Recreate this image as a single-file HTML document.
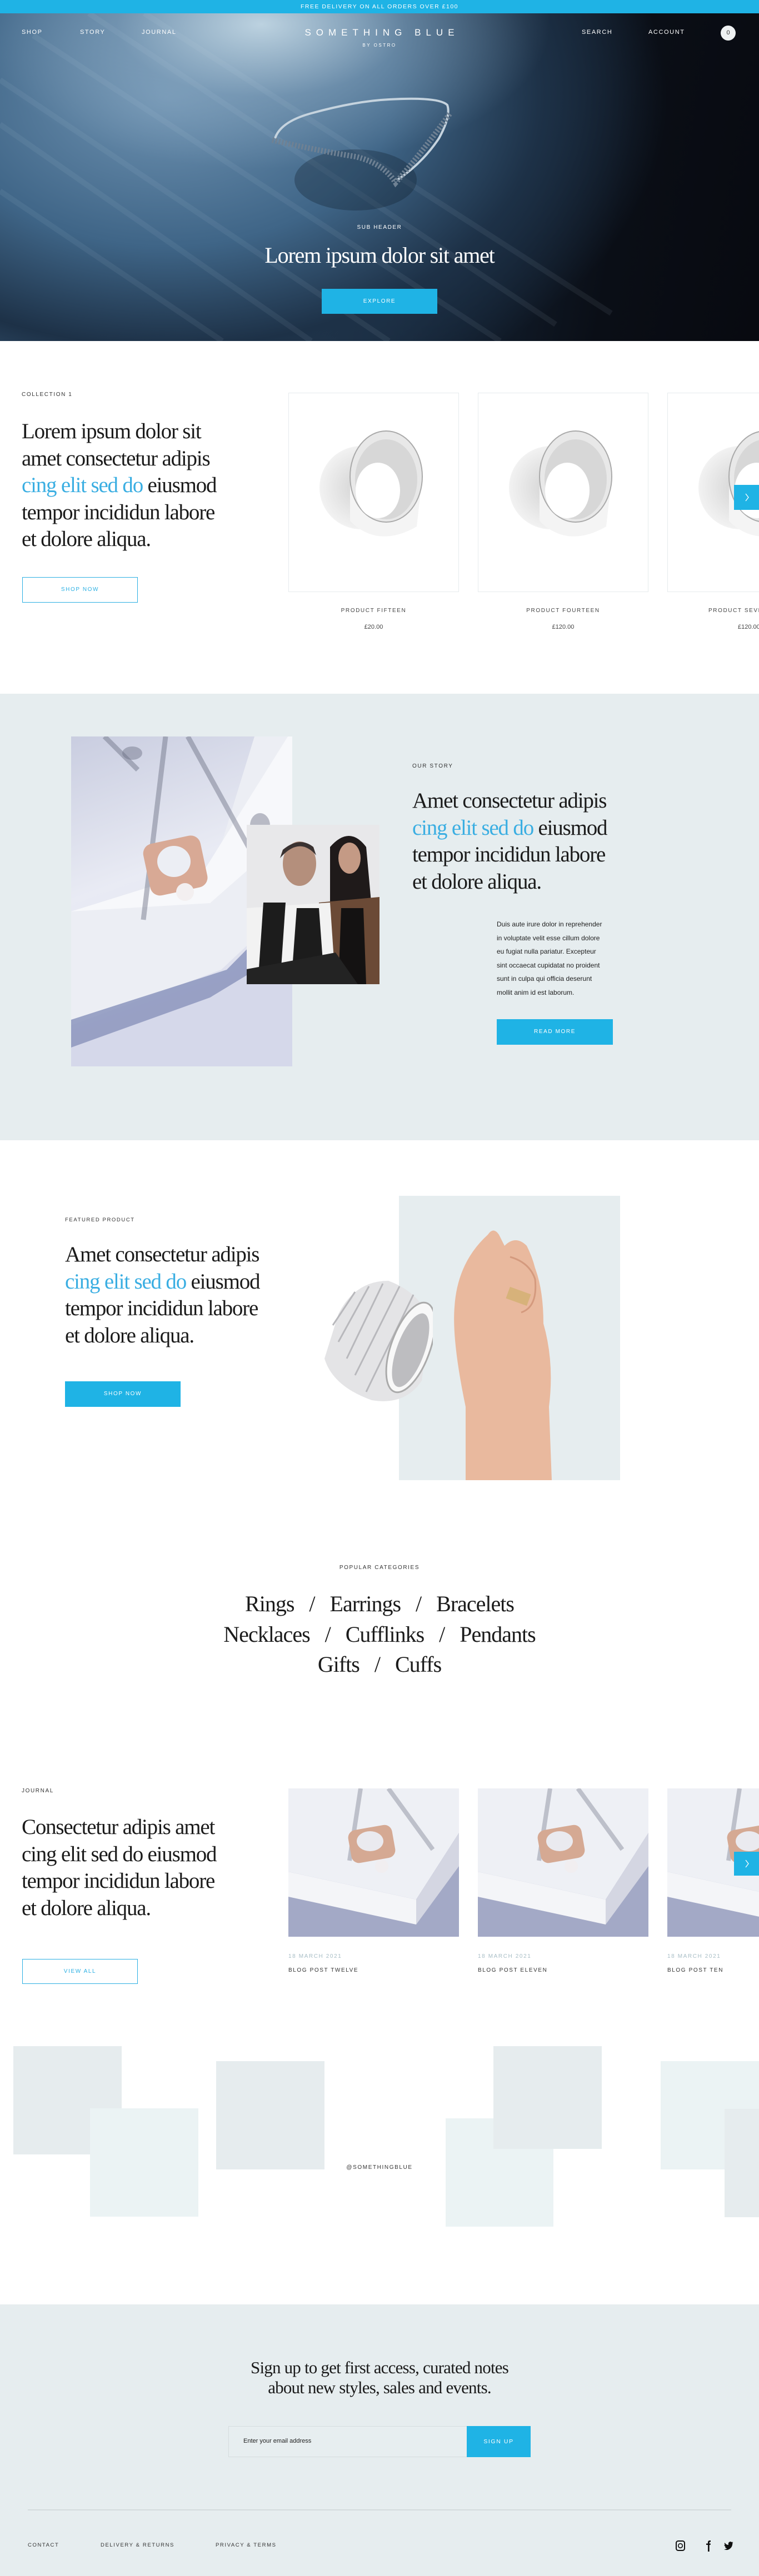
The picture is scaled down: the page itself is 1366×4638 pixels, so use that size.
<!DOCTYPE html>
<html><head><meta charset="utf-8"><style>
*{margin:0;padding:0;box-sizing:border-box}
html,body{width:1366px;height:4638px;overflow:hidden}
body{position:relative;background:#fff;font-family:"Liberation Sans",sans-serif}
#w{position:absolute;left:0;top:0;width:1366px;height:4638px;overflow:hidden}
.a{position:absolute}
.sm{font-size:11px;letter-spacing:1.6px;text-transform:uppercase;white-space:nowrap}
.h{font-family:"Liberation Serif",serif;font-size:39px;line-height:48.5px;color:#1b1b1b;letter-spacing:-1.2px;white-space:nowrap}
.b{color:#3aaee2}
.btn{background:#1fb3e5;color:#fff;text-align:center;font-size:11px;letter-spacing:1.6px}
.obtn{border:1.5px solid #2cb0e3;color:#2cb0e3;text-align:center;font-size:11px;letter-spacing:1.6px}
.card{border:1px solid #e6ebed;background:#fff;overflow:hidden}
.gray{background:#e6edef}
</style></head><body><div id="w">

<div class="a" style="left:0;top:0;width:1366px;height:24px;background:#1fb3e5;color:#fff;text-align:center;line-height:24px;font-size:10.5px;letter-spacing:1.5px">FREE DELIVERY ON ALL ORDERS OVER £100</div>

<div class="a" style="left:0;top:24px;width:1366px;height:590px;overflow:hidden;background:
radial-gradient(ellipse 520px 260px at 470px 20px,rgba(200,220,232,.9),rgba(140,170,195,.5) 50%,rgba(0,0,0,0) 100%),
radial-gradient(ellipse 900px 600px at 300px 150px,#6f93b2,#3f6587 45%,#1d3147 75%,rgba(10,14,22,0) 100%),
linear-gradient(100deg,#4a6f90 0%,#2a4560 35%,#142233 60%,#0a0e16 80%,#080a10 100%)">
<svg class="a" style="left:0;top:0" width="1366" height="590">
<g opacity=".07" stroke="#cfe1ee" stroke-width="10">
<line x1="0" y1="120" x2="700" y2="590"/><line x1="0" y1="200" x2="560" y2="590"/><line x1="60" y1="40" x2="900" y2="590"/><line x1="160" y1="0" x2="1000" y2="560"/><line x1="0" y1="320" x2="400" y2="590"/><line x1="260" y1="0" x2="1100" y2="540"/>
</g>
<ellipse cx="640" cy="300" rx="110" ry="55" fill="#0d1a28" opacity=".3"/>
<path d="M495 225 Q505 195 560 180 Q640 158 700 155 Q790 150 805 165 Q812 185 790 225 Q760 270 715 300" fill="none" stroke="#c5d3de" stroke-width="4"/>
<path d="M490 228 Q560 245 640 258 Q690 270 712 305 Q760 250 810 180" fill="none" stroke="#6f8193" stroke-width="10" stroke-dasharray="3 3"/>
</svg>
<div class="a sm" style="left:39px;top:28px;color:#fff">SHOP</div>
<div class="a sm" style="left:144px;top:28px;color:#fff">STORY</div>
<div class="a sm" style="left:255px;top:28px;color:#fff">JOURNAL</div>
<div class="a" style="left:0;width:1366px;top:25px;text-align:center;color:#fff;font-size:17px;letter-spacing:9px;text-indent:9px">SOMETHING BLUE</div>
<div class="a" style="left:0;width:1366px;top:53px;text-align:center;color:#fff;font-size:8px;letter-spacing:2.5px">BY OSTRO</div>
<div class="a sm" style="left:1047px;top:28px;color:#fff">SEARCH</div>
<div class="a sm" style="left:1167px;top:28px;color:#fff">ACCOUNT</div>
<div class="a" style="left:1297px;top:22px;width:27px;height:27px;border-radius:50%;background:#eef1f2;color:#333;font-size:11px;text-align:center;line-height:27px">0</div>
<div class="a sm" style="left:0;width:1366px;text-align:center;top:380px;color:#fff;font-size:10px">SUB HEADER</div>
<div class="a h" style="left:0;width:1366px;text-align:center;top:412px;color:#fff;font-size:40px">Lorem ipsum dolor sit amet</div>
<div class="a btn" style="left:579px;top:496px;width:208px;height:45px;line-height:45px;font-size:10px">EXPLORE</div>
</div>

<div class="a sm" style="left:39px;top:705px;color:#333;font-size:10px">COLLECTION 1</div>
<div class="a h" style="left:39px;top:753px">Lorem ipsum dolor sit<br>amet consectetur adipis<br><span class="b">cing elit sed do</span> eiusmod<br>tempor incididun labore<br>et dolore aliqua.</div>
<div class="a obtn" style="left:40px;top:1039px;width:208px;height:46px;line-height:44px;font-size:10px">SHOP NOW</div>

<svg width="0" height="0" style="position:absolute"><defs>
<radialGradient id="sh" cx=".5" cy=".5" r=".5"><stop offset="0" stop-color="#d2d2d2"/><stop offset="1" stop-color="#f2f2f2"/></radialGradient>
</defs></svg>

<div class="a card" style="left:519px;top:707px;width:307px;height:359px">
<svg width="305" height="357"><ellipse cx="130" cy="170" rx="75" ry="75" fill="url(#sh)"/><path d="M110 140 L110 230 Q160 280 230 240 L240 150 Z" fill="#f4f4f4"/><ellipse cx="175" cy="150" rx="65" ry="82" fill="#e8e8e8" stroke="#aaa" stroke-width="2"/><ellipse cx="175" cy="155" rx="56" ry="72" fill="#d7d7d7"/><ellipse cx="160" cy="175" rx="40" ry="50" fill="#fff"/></svg>
</div>
<div class="a card" style="left:860px;top:707px;width:307px;height:359px">
<svg width="305" height="357"><ellipse cx="130" cy="170" rx="75" ry="75" fill="url(#sh)"/><path d="M110 140 L110 230 Q160 280 230 240 L240 150 Z" fill="#f4f4f4"/><ellipse cx="175" cy="150" rx="65" ry="82" fill="#e8e8e8" stroke="#aaa" stroke-width="2"/><ellipse cx="175" cy="155" rx="56" ry="72" fill="#d7d7d7"/><ellipse cx="160" cy="175" rx="40" ry="50" fill="#fff"/></svg>
</div>
<div class="a card" style="left:1201px;top:707px;width:165px;height:359px;border-right:none">
<svg width="165" height="357"><ellipse cx="130" cy="170" rx="75" ry="75" fill="url(#sh)"/><path d="M110 140 L110 230 Q160 280 230 240 L240 150 Z" fill="#f4f4f4"/><ellipse cx="175" cy="150" rx="65" ry="82" fill="#e8e8e8" stroke="#aaa" stroke-width="2"/><ellipse cx="175" cy="155" rx="56" ry="72" fill="#d7d7d7"/><ellipse cx="160" cy="175" rx="40" ry="50" fill="#fff"/></svg>
</div>
<div class="a sm" style="left:519px;width:307px;text-align:center;top:1094px;color:#444;font-size:10px">PRODUCT FIFTEEN</div>
<div class="a" style="left:519px;width:307px;text-align:center;top:1123px;color:#444;font-size:11px">£20.00</div>
<div class="a sm" style="left:860px;width:307px;text-align:center;top:1094px;color:#444;font-size:10px">PRODUCT FOURTEEN</div>
<div class="a" style="left:860px;width:307px;text-align:center;top:1123px;color:#444;font-size:11px">£120.00</div>
<div class="a sm" style="left:1275px;top:1094px;color:#444;font-size:10px">PRODUCT SEVENTEEN</div>
<div class="a" style="left:1328px;top:1123px;color:#444;font-size:11px;white-space:nowrap">£120.00</div>
<div class="a" style="left:1321px;top:873px;width:45px;height:45px;background:#1fb3e5"><svg width="45" height="45"><path d="M21 16 L26 22.5 L21 29" fill="none" stroke="#fff" stroke-width="1.3"/></svg></div>

<div class="a gray" style="left:0;top:1249px;width:1366px;height:804px"></div>
<div class="a" style="left:128px;top:1326px;width:398px;height:594px;overflow:hidden;background:linear-gradient(160deg,#c9cde0 0%,#e9ebf4 40%,#dfe1ee 70%,#c3c7e0 100%)">
<svg width="398" height="594">
<polygon points="0,315 0,520 270,420 398,300 398,0 330,0 250,260" fill="#eceef4"/>
<polygon points="0,315 250,300 398,170 398,0 390,0 240,240" fill="#f7f8fb"/>
<polygon points="0,510 280,420 398,300 398,420 270,680 0,680" fill="#8c95bd" opacity=".85"/>
<polygon points="0,560 250,470 398,380 398,594 0,594" fill="#d5d8ea"/>
<g stroke="#6a6f82" stroke-width="9" opacity=".45" fill="none"><path d="M170 0 L130 330"/><path d="M210 0 L320 200"/><path d="M60 0 L120 60"/></g>
<ellipse cx="110" cy="30" rx="18" ry="12" fill="#6a6f82" opacity=".45"/><ellipse cx="340" cy="160" rx="18" ry="22" fill="#6a6f82" opacity=".45"/>
<rect x="135" y="185" width="105" height="95" rx="18" fill="#d8a995" transform="rotate(-12 187 232)"/>
<ellipse cx="185" cy="225" rx="30" ry="28" fill="#eceef4"/>
<circle cx="205" cy="280" r="16" fill="#f3eff0"/>
</svg></div>
<div class="a" style="left:444px;top:1485px;width:239px;height:287px;background:#e8e8ea;overflow:hidden">
<svg width="239" height="287">
<ellipse cx="95" cy="70" rx="30" ry="40" fill="#b48f7c"/>
<path d="M60 60 Q95 20 125 55 L120 40 Q95 20 65 45Z" fill="#3a3231"/>
<path d="M150 40 Q185 0 215 40 L225 150 L150 150 Z" fill="#1f1a1a"/>
<ellipse cx="185" cy="60" rx="20" ry="28" fill="#c49a85"/>
<path d="M130 140 L239 130 L239 287 L120 287 Z" fill="#6b4a36"/>
<path d="M170 150 L210 150 L215 287 L165 287 Z" fill="#141212"/>
<path d="M0 150 L150 140 L160 287 L0 287 Z" fill="#f2f2f2"/>
<path d="M30 140 L70 140 L60 287 L20 287 Z" fill="#1c1c1c"/>
<path d="M90 150 L130 150 L140 287 L80 287 Z" fill="#1c1c1c"/>
<path d="M0 260 L160 230 L200 287 L0 287 Z" fill="#232323"/>
</svg></div>
<div class="a sm" style="left:742px;top:1374px;color:#333;font-size:10px">OUR STORY</div>
<div class="a h" style="left:742px;top:1418px">Amet consectetur adipis<br><span class="b">cing elit sed do</span> eiusmod<br>tempor incididun labore<br>et dolore aliqua.</div>
<div class="a" style="left:894px;top:1652px;font-size:12px;line-height:24.5px;color:#222;white-space:nowrap">Duis aute irure dolor in reprehender<br>in voluptate velit esse cillum dolore<br>eu fugiat nulla pariatur. Excepteur<br>sint occaecat cupidatat no proident<br>sunt in culpa qui officia deserunt<br>mollit anim id est laborum.</div>
<div class="a btn" style="left:894px;top:1835px;width:209px;height:46px;line-height:46px;font-size:10px">READ MORE</div>

<div class="a sm" style="left:117px;top:2191px;color:#333;font-size:9.5px">FEATURED PRODUCT</div>
<div class="a h" style="left:117px;top:2235px">Amet consectetur adipis<br><span class="b">cing elit sed do</span> eiusmod<br>tempor incididun labore<br>et dolore aliqua.</div>
<div class="a btn" style="left:117px;top:2487px;width:208px;height:46px;line-height:46px;font-size:10px">SHOP NOW</div>
<div class="a gray" style="left:718px;top:2153px;width:398px;height:512px;overflow:hidden">
<svg width="398" height="512">
<path d="M120 512 L120 380 Q95 260 100 200 Q105 120 160 70 Q170 55 180 70 L190 90 Q210 70 230 90 Q240 110 245 130 Q260 170 260 230 Q280 300 270 380 L275 512 Z" fill="#e9b99e"/>
<path d="M200 110 Q235 120 245 150 Q250 200 220 210" fill="none" stroke="#d49a7e" stroke-width="3"/>
<rect x="195" y="170" width="40" height="22" fill="#d7b27a" transform="rotate(20 215 181)"/>
</svg></div>
<svg class="a" style="left:579px;top:2296px" width="200" height="230">
<path d="M30 70 Q60 10 120 10 Q175 30 195 80 L180 190 Q150 235 90 225 Q20 200 5 150 Z" fill="#e4e4e6"/>
<g stroke="#b8b8bc" stroke-width="3"><line x1="20" y1="90" x2="60" y2="30"/><line x1="30" y1="120" x2="85" y2="20"/><line x1="45" y1="150" x2="110" y2="15"/><line x1="60" y1="180" x2="140" y2="20"/><line x1="80" y1="210" x2="165" y2="35"/></g>
<ellipse cx="160" cy="130" rx="35" ry="85" fill="#f8f8f8" stroke="#aaa" stroke-width="3" transform="rotate(20 160 130)"/>
<ellipse cx="160" cy="135" rx="25" ry="70" fill="#bdbdc0" transform="rotate(20 160 135)"/>
</svg>

<div class="a sm" style="left:0;width:1366px;text-align:center;top:2817px;color:#333;font-size:10px">POPULAR CATEGORIES</div>
<div class="a" style="left:0;width:1366px;text-align:center;top:2861px;font-family:'Liberation Serif',serif;font-size:40px;line-height:54.5px;color:#1b1b1b;letter-spacing:-1px">Rings &nbsp; / &nbsp; Earrings &nbsp; / &nbsp; Bracelets<br>Necklaces &nbsp; / &nbsp; Cufflinks &nbsp; / &nbsp; Pendants<br>Gifts &nbsp; / &nbsp; Cuffs</div>

<div class="a sm" style="left:39px;top:3219px;color:#333;font-size:10px">JOURNAL</div>
<div class="a h" style="left:39px;top:3266px">Consectetur adipis amet<br>cing elit sed do eiusmod<br>tempor incididun labore<br>et dolore aliqua.</div>
<div class="a obtn" style="left:40px;top:3527px;width:208px;height:45px;line-height:43px;font-size:10px">VIEW ALL</div>
<div class="a" style="left:519px;top:3220px;width:307px;height:267px;overflow:hidden;background:#e6e7ef"><svg width="307" height="267"><polygon points="0,0 307,0 307,80 230,200 0,150" fill="#eef0f5"/><polygon points="0,150 230,200 307,80 307,267 0,267" fill="#a3a9c6"/><polygon points="0,150 230,200 230,245 0,195" fill="#f4f5f8"/><polygon points="230,200 307,80 307,140 230,245" fill="#d4d6e2"/><g stroke="#767a8c" stroke-width="8" opacity=".4"><line x1="130" y1="0" x2="110" y2="130"/><line x1="180" y1="0" x2="260" y2="110"/></g><rect x="110" y="70" width="80" height="60" rx="14" fill="#d5a993" transform="rotate(-10 150 100)"/><ellipse cx="147" cy="95" rx="24" ry="18" fill="#eaeaef"/><circle cx="168" cy="140" r="12" fill="#f1eef0"/></svg></div>
<div class="a" style="left:860px;top:3220px;width:307px;height:267px;overflow:hidden;background:#e6e7ef"><svg width="307" height="267"><polygon points="0,0 307,0 307,80 230,200 0,150" fill="#eef0f5"/><polygon points="0,150 230,200 307,80 307,267 0,267" fill="#a3a9c6"/><polygon points="0,150 230,200 230,245 0,195" fill="#f4f5f8"/><polygon points="230,200 307,80 307,140 230,245" fill="#d4d6e2"/><g stroke="#767a8c" stroke-width="8" opacity=".4"><line x1="130" y1="0" x2="110" y2="130"/><line x1="180" y1="0" x2="260" y2="110"/></g><rect x="110" y="70" width="80" height="60" rx="14" fill="#d5a993" transform="rotate(-10 150 100)"/><ellipse cx="147" cy="95" rx="24" ry="18" fill="#eaeaef"/><circle cx="168" cy="140" r="12" fill="#f1eef0"/></svg></div>
<div class="a" style="left:1201px;top:3220px;width:165px;height:267px;overflow:hidden;background:#e6e7ef"><svg width="307" height="267"><polygon points="0,0 307,0 307,80 230,200 0,150" fill="#eef0f5"/><polygon points="0,150 230,200 307,80 307,267 0,267" fill="#a3a9c6"/><polygon points="0,150 230,200 230,245 0,195" fill="#f4f5f8"/><g stroke="#767a8c" stroke-width="8" opacity=".4"><line x1="130" y1="0" x2="110" y2="130"/></g><rect x="110" y="70" width="80" height="60" rx="14" fill="#d5a993" transform="rotate(-10 150 100)"/><ellipse cx="147" cy="95" rx="24" ry="18" fill="#eaeaef"/><circle cx="168" cy="140" r="12" fill="#f1eef0"/></svg></div>
<div class="a" style="left:1321px;top:3334px;width:45px;height:43px;background:#1fb3e5"><svg width="45" height="43"><path d="M21 15 L26 21.5 L21 28" fill="none" stroke="#fff" stroke-width="1.3"/></svg></div>
<div class="a sm" style="left:519px;top:3517px;color:#a8bec6;font-size:10px">18 MARCH 2021</div>
<div class="a sm" style="left:519px;top:3542px;color:#333;font-size:10px">BLOG POST TWELVE</div>
<div class="a sm" style="left:860px;top:3517px;color:#a8bec6;font-size:10px">18 MARCH 2021</div>
<div class="a sm" style="left:860px;top:3542px;color:#333;font-size:10px">BLOG POST ELEVEN</div>
<div class="a sm" style="left:1201px;top:3517px;color:#a8bec6;font-size:10px">18 MARCH 2021</div>
<div class="a sm" style="left:1201px;top:3542px;color:#333;font-size:10px">BLOG POST TEN</div>

<div class="a" style="left:24px;top:3684px;width:195px;height:195px;background:#e6ecee"></div>
<div class="a" style="left:162px;top:3796px;width:195px;height:195px;background:#ebf3f4"></div>
<div class="a" style="left:389px;top:3711px;width:195px;height:195px;background:#e6ecee"></div>
<div class="a" style="left:802px;top:3814px;width:194px;height:195px;background:#ebf3f4"></div>
<div class="a" style="left:888px;top:3684px;width:195px;height:185px;background:#e6ecee"></div>
<div class="a" style="left:1189px;top:3711px;width:177px;height:195px;background:#ebf3f4"></div>
<div class="a" style="left:1304px;top:3797px;width:62px;height:195px;background:#e6ecee"></div>
<div class="a sm" style="left:0;width:1366px;text-align:center;top:3897px;color:#333;font-size:10px">@SOMETHINGBLUE</div>

<div class="a gray" style="left:0;top:4149px;width:1366px;height:489px"></div>
<div class="a" style="left:0;width:1366px;text-align:center;top:4245px;font-family:'Liberation Serif',serif;font-size:31px;line-height:36px;color:#1b1b1b;letter-spacing:-0.8px">Sign up to get first access, curated notes<br>about new styles, sales and events.</div>
<div class="a" style="left:411px;top:4368px;width:430px;height:56px;border:1px solid #d5dcde;background:#e7eef0"></div>
<div class="a" style="left:438px;top:4389px;font-size:11px;color:#222">Enter your email address</div>
<div class="a btn" style="left:840px;top:4368px;width:115px;height:56px;line-height:56px;font-size:10.5px">SIGN UP</div>
<div class="a" style="left:50px;top:4518px;width:1266px;height:2px;background:#d3dadc"></div>
<div class="a sm" style="left:50px;top:4577px;color:#333;font-size:9.5px">CONTACT</div>
<div class="a sm" style="left:181px;top:4577px;color:#333;font-size:9.5px">DELIVERY &amp; RETURNS</div>
<div class="a sm" style="left:388px;top:4577px;color:#333;font-size:9.5px">PRIVACY &amp; TERMS</div>
<svg class="a" style="left:1215px;top:4573px" width="105" height="22">
<rect x="2" y="2" width="15" height="17" rx="3.5" fill="none" stroke="#111" stroke-width="2"/><circle cx="9.5" cy="10.5" r="3.8" fill="none" stroke="#111" stroke-width="1.6"/>
<path d="M59 21 L59 9 L56 9 L56 6.5 L59 6.5 L59 4.5 Q59 1 62.5 1 L64 1 L64 3.6 L62.8 3.6 Q61.7 3.6 61.7 4.8 L61.7 6.5 L64 6.5 L63.6 9 L61.7 9 L61.7 21 Z" fill="#111"/>
<path d="M91 7 Q93 9 96 9 Q95 5 98 3.5 Q100.5 2.5 102 4.2 L104 3.2 L103 5 L104.5 4.6 L103.3 6 Q103.3 14 96 17.5 Q92 19 88 17 Q91.5 17 93.5 15.3 Q90.5 15 89.8 12.5 L91.2 12.4 Q88.5 11.5 88.5 8.8 L90 9.2 Q88.2 7.3 89.3 5 Z" fill="#111"/>
</svg>
</div></body></html>
